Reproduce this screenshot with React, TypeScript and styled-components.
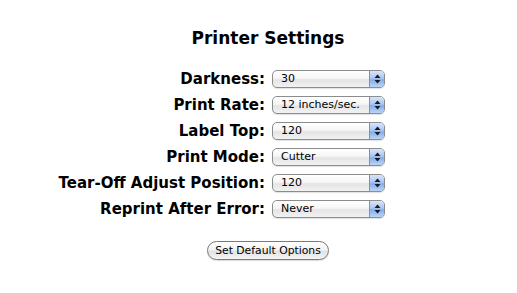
import React from "react";
import styled, { createGlobalStyle } from "styled-components";

const Global = createGlobalStyle`
  html, body { margin: 0; padding: 0; background: #ffffff; }
  body { font-family: "DejaVu Sans", "Liberation Sans", sans-serif; color: #000; }
`;

const Page = styled.div`
  width: 517px;
  height: 293px;
  box-sizing: border-box;
  padding-top: 26px;
  display: flex;
  flex-direction: column;
`;

const Title = styled.h1`
  margin: 0 0 0 19px;
  text-align: center;
  font-size: 17px;
  font-weight: bold;
  line-height: 24px;
`;

const Form = styled.div`
  margin: 20px 0 0 0;
  display: grid;
  grid-template-columns: 265px 113px;
  column-gap: 7px;
  row-gap: 8px;
  align-items: center;
`;

const Label = styled.div`
  text-align: right;
  font-size: 15px;
  font-weight: bold;
  line-height: 18px;
  white-space: nowrap;
`;

const SelectBox = styled.div`
  height: 18px;
  box-sizing: border-box;
  border: 1px solid #8c8c8c;
  border-radius: 5px;
  display: flex;
  overflow: hidden;
  background: linear-gradient(#ffffff 0%, #f6f6f6 45%, #e4e4e4 55%, #f2f2f2 100%);
  box-shadow: 0 1px 1px rgba(0, 0, 0, 0.12);
`;

const SelectText = styled.span`
  flex: 1;
  padding-left: 8px;
  font-size: 11px;
  line-height: 16px;
  white-space: nowrap;
  overflow: hidden;
`;

const ArrowPart = styled.span`
  width: 14px;
  border-left: 1px solid #7f8fb8;
  background: linear-gradient(#d8e6fb 0%, #a9c6f2 45%, #85adeb 55%, #b9d4f7 100%);
  display: flex;
  align-items: center;
  justify-content: center;
`;

const ButtonRow = styled.div`
  margin: 23px 0 0 19px;
  display: flex;
  justify-content: center;
`;

const Button = styled.button`
  height: 19px;
  padding: 0 7px;
  border: 1px solid #7a7a7a;
  border-radius: 10px;
  background: linear-gradient(#ffffff 0%, #f4f4f4 45%, #e2e2e2 55%, #f5f5f5 100%);
  font-family: "DejaVu Sans", sans-serif;
  font-size: 10.8px;
  line-height: 17px;
  color: #000;
  box-shadow: 0 1px 1px rgba(0, 0, 0, 0.15);
`;

const Arrows = () => (
  <svg width="7" height="10" viewBox="0 0 7 10">
    <path d="M3.5 0.5 L6.5 4 L0.5 4 Z" fill="#1a1a1a" />
    <path d="M3.5 9.5 L6.5 6 L0.5 6 Z" fill="#1a1a1a" />
  </svg>
);

const rows: [string, string][] = [
  ["Darkness:", "30"],
  ["Print Rate:", "12 inches/sec."],
  ["Label Top:", "120"],
  ["Print Mode:", "Cutter"],
  ["Tear-Off Adjust Position:", "120"],
  ["Reprint After Error:", "Never"],
];

export default function App() {
  return (
    <>
      <Global />
      <Page>
        <Title>Printer Settings</Title>
        <Form>
          {rows.map(([l, v]) => (
            <React.Fragment key={l}>
              <Label>{l}</Label>
              <SelectBox>
                <SelectText>{v}</SelectText>
                <ArrowPart>
                  <Arrows />
                </ArrowPart>
              </SelectBox>
            </React.Fragment>
          ))}
        </Form>
        <ButtonRow>
          <Button>Set Default Options</Button>
        </ButtonRow>
      </Page>
    </>
  );
}
